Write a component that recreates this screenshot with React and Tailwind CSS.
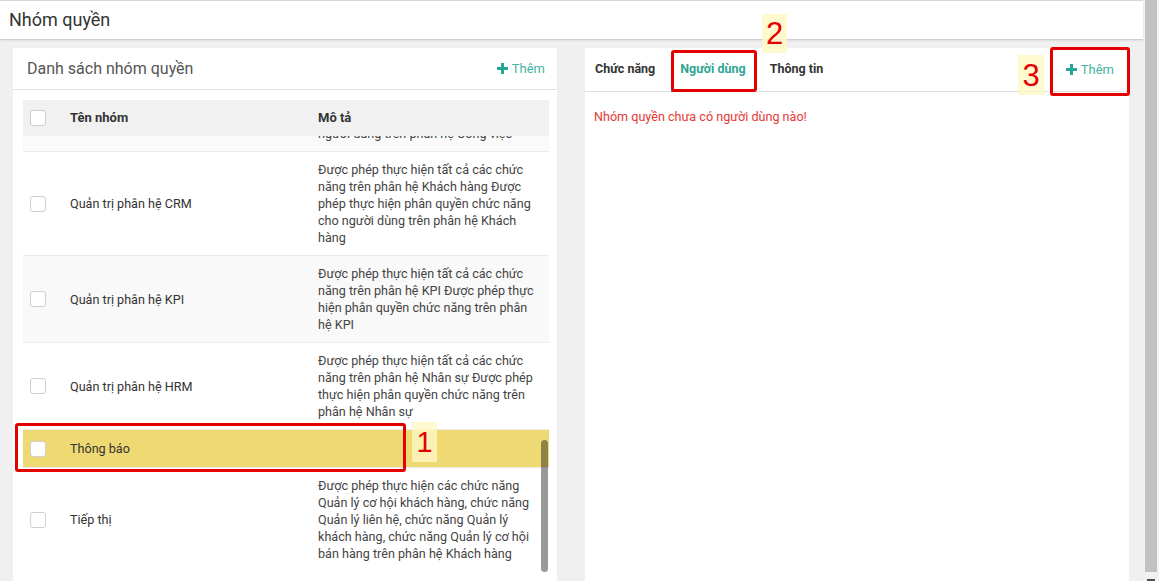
import React from "react";

const Plus = () => (
  <svg width="11" height="11" viewBox="0 0 11 11" className="mr-[4px]">
    <rect x="4" y="0" width="3" height="11" fill="#26a69a" />
    <rect x="0" y="4" width="11" height="3" fill="#26a69a" />
  </svg>
);

const Checkbox = () => (
  <div className="w-[16px] h-[16px] rounded-[3px] border border-[#cfcfcf] bg-white" />
);

const rows = [
  {
    name: "Quản trị phân hệ CRM",
    bg: "bg-white",
    lines: [
      "Được phép thực hiện tất cả các chức",
      "năng trên phân hệ Khách hàng Được",
      "phép thực hiện phân quyền chức năng",
      "cho người dùng trên phân hệ Khách",
      "hàng",
    ],
  },
  {
    name: "Quản trị phân hệ KPI",
    bg: "bg-[#f9f9f9]",
    lines: [
      "Được phép thực hiện tất cả các chức",
      "năng trên phân hệ KPI Được phép thực",
      "hiện phân quyền chức năng trên phân",
      "hệ KPI",
    ],
  },
  {
    name: "Quản trị phân hệ HRM",
    bg: "bg-white",
    lines: [
      "Được phép thực hiện tất cả các chức",
      "năng trên phân hệ Nhân sự Được phép",
      "thực hiện phân quyền chức năng trên",
      "phân hệ Nhân sự",
    ],
  },
  {
    name: "Thông báo",
    bg: "bg-[#eed972]",
    lines: [],
    single: true,
  },
  {
    name: "Tiếp thị",
    bg: "bg-white",
    lines: [
      "Được phép thực hiện các chức năng",
      "Quản lý cơ hội khách hàng, chức năng",
      "Quản lý liên hệ, chức năng Quản lý",
      "khách hàng, chức năng Quản lý cơ hội",
      "bán hàng trên phân hệ Khách hàng",
    ],
  },
];

export default function App() {
  return (
    <div
      className="relative w-[1159px] h-[581px] flex overflow-hidden bg-[#f0f0f0] text-[#333]"
      style={{ fontFamily: "Roboto, 'Liberation Sans', sans-serif" }}
    >
      <div className="flex flex-col w-[1144px] min-w-0">
        {/* header */}
        <div className="h-[40px] w-[1143px] bg-white border-t border-[#d6d6d6] border-b border-b-[#cfcfcf] shadow-[0_1px_2px_rgba(0,0,0,0.08)] flex items-center pl-[9px]">
          <span className="text-[18px] text-[#333] leading-none">Nhóm quyền</span>
        </div>

        {/* content */}
        <div className="flex-1 min-h-0 flex gap-[28px] pl-[13px] pt-[8px]">
          {/* left card */}
          <div className="w-[544px] bg-white flex flex-col min-h-0">
            <div className="h-[42px] flex items-center justify-between pl-[14px] pr-[12px] border-b border-[#e3e3e3] shrink-0">
              <span className="text-[16px] text-[#555]">Danh sách nhóm quyền</span>
              <span className="flex items-center text-[13px] text-[#45b3a3]">
                <Plus />
                Thêm
              </span>
            </div>
            <div className="ml-[10px] mr-[8px] mt-[10px] flex-1 min-h-0 flex flex-col">
              <div className="h-[36px] bg-[#f1f1f1] flex items-center shrink-0 text-[13px]">
                <div className="w-[47px] pl-[7px]">
                  <Checkbox />
                </div>
                <div className="w-[248px] font-bold text-[#333]">Tên nhóm</div>
                <div className="flex-1 font-bold text-[#333]">Mô tả</div>
              </div>
              <div className="relative flex-1 min-h-0 overflow-hidden text-[12.6px] leading-[17px]">
                <div className="h-[15px] overflow-hidden bg-[#fafafa] flex">
                  <div className="w-[295px]" />
                  <div className="mt-[-11px] whitespace-nowrap text-[#444]">
                    người dùng trên phân hệ Công việc
                  </div>
                </div>
                {rows.map((r) => (
                  <div
                    key={r.name}
                    className={`flex items-center border-t border-[#ebebeb] ${r.bg} ${
                      r.single ? "py-[10px]" : "py-[9px]"
                    }`}
                  >
                    <div className="w-[47px] pl-[7px] flex items-center">
                      <Checkbox />
                    </div>
                    <div className="w-[248px] text-[#333]">{r.name}</div>
                    <div className="flex-1 text-[#444]">
                      {r.lines.length === 0 ? (
                        <span>&nbsp;</span>
                      ) : (
                        r.lines.map((l, i) => (
                          <div key={i} className="whitespace-nowrap">
                            {l}
                          </div>
                        ))
                      )}
                    </div>
                  </div>
                ))}
                {/* inner scrollbar */}
                <div className="absolute right-[1px] top-[304px] w-[7px] h-[132px] rounded-full bg-black/40" />
              </div>
            </div>
          </div>

          {/* right card */}
          <div className="w-[544px] bg-white flex flex-col min-h-0">
            <div className="h-[44px] flex items-stretch justify-between border-b border-[#e0e0e0] shrink-0">
              <div className="flex items-stretch gap-[6px] text-[12.5px] font-bold">
                <div className="flex items-center px-[10px] text-[#333]">Chức năng</div>
                <div className="flex items-center px-[9px] text-[#30a595] border-b-2 border-[#30a595] -mb-px">
                  Người dùng
                </div>
                <div className="flex items-center px-[9px] text-[#333]">Thông tin</div>
              </div>
              <div className="flex items-center pr-[15px] text-[13px] text-[#45b3a3]">
                <Plus />
                Thêm
              </div>
            </div>
            <div className="pt-[16px] pl-[9px] text-[12.6px] leading-[17px] text-[#e53935]">
              Nhóm quyền chưa có người dùng nào!
            </div>
          </div>
        </div>
      </div>

      {/* page scrollbar */}
      <div className="relative w-[15px] h-full bg-[#f1f1f1]">
        <div className="absolute left-[1px] top-0 w-[12px] h-[572px] bg-[#c1c1c1]" />
        <div className="absolute left-[3px] bottom-0 w-[8px] h-[2px] bg-[#505050]" />
      </div>

      {/* annotations */}
      <div className="absolute left-[15px] top-[423px] w-[391px] h-[49px] border-[3px] border-[#e50000] rounded-[3px]" />
      <div className="absolute left-[412px] top-[422px] w-[25px] h-[40px] bg-[#fff7c4]/80 flex items-center justify-center text-[29px] leading-none text-[#e50000]" style={{ fontFamily: "'Liberation Sans', Arial, sans-serif" }}>
        1
      </div>

      <div className="absolute left-[671px] top-[50px] w-[86px] h-[42px] border-[3px] border-[#e50000] rounded-[3px]" />
      <div className="absolute left-[762px] top-[14px] w-[25px] h-[39px] bg-[#fff7c4]/80 flex items-center justify-center text-[31px] leading-none text-[#e50000]" style={{ fontFamily: "'Liberation Sans', Arial, sans-serif" }}>
        2
      </div>

      <div className="absolute left-[1050px] top-[47px] w-[80px] h-[49px] border-[3px] border-[#e50000] rounded-[3px]" />
      <div className="absolute left-[1018px] top-[55px] w-[26px] h-[40px] bg-[#fff7c4]/80 flex items-center justify-center text-[31px] leading-none text-[#e50000]" style={{ fontFamily: "'Liberation Sans', Arial, sans-serif" }}>
        3
      </div>
    </div>
  );
}
